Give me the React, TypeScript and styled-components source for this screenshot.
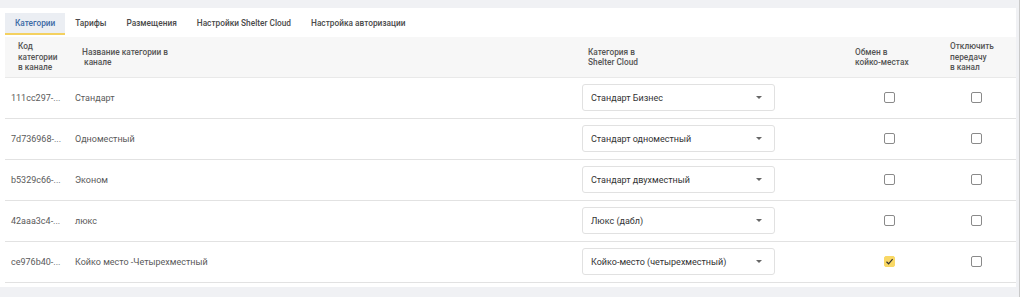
import React from 'react';
import styled, { createGlobalStyle } from 'styled-components';

const GlobalStyle = createGlobalStyle`
  html, body {
    margin: 0;
    padding: 0;
    background: #ffffff;
    font-family: Roboto, "Liberation Sans", Arial, sans-serif;
  }
`;

const rows = [
  { code: '111cc297-...', name: 'Стандарт', category: 'Стандарт Бизнес', beds: false, off: false },
  { code: '7d736968-...', name: 'Одноместный', category: 'Стандарт одноместный', beds: false, off: false },
  { code: 'b5329c66-...', name: 'Эконом', category: 'Стандарт двухместный', beds: false, off: false },
  { code: '42aaa3c4-...', name: 'люкс', category: 'Люкс (дабл)', beds: false, off: false },
  {
    code: 'ce976b40-...',
    name: 'Койко место -Четырехместный',
    category: 'Койко-место (четырехместный)',
    beds: true,
    off: false,
  },
];

const tabs = ['Категории', 'Тарифы', 'Размещения', 'Настройки Shelter Cloud', 'Настройка авторизации'];

const Checkbox = ({ checked }: { checked: boolean }) => (
  <Box $checked={checked}>
    {checked && (
      <svg width="9" height="9" viewBox="0 0 9 9">
        <path d="M1.5 4.8 L3.6 6.8 L7.6 2.2" fill="none" stroke="#333" strokeWidth="1.2" />
      </svg>
    )}
  </Box>
);

const App = () => {
  return (
    <Page>
      <GlobalStyle />
      <Main>
        <Card>
          <Tabs>
            {tabs.map((t, i) => (
              <Tab key={t} $active={i === 0}>
                {t}
              </Tab>
            ))}
          </Tabs>
          <HeaderRow>
            <HeadCell $pad={13}>
              Код
              <br />
              категории
              <br />в канале
            </HeadCell>
            <HeadCell $pad={12}>
              Название категории в
              <br />
              &nbsp;канале
            </HeadCell>
            <HeadCell $pad={12}>
              Категория в
              <br />
              Shelter Cloud
            </HeadCell>
            <HeadCell $pad={6}>
              Обмен в
              <br />
              койко-местах
            </HeadCell>
            <HeadCell $pad={6}>
              Отключить
              <br />
              передачу
              <br />в канал
            </HeadCell>
          </HeaderRow>
          {rows.map((r) => (
            <Row key={r.code}>
              <Cell $pad={6}>{r.code}</Cell>
              <Cell $pad={5}>{r.name}</Cell>
              <Cell $pad={6}>
                <Select>
                  <span>{r.category}</span>
                  <Arrow />
                </Select>
              </Cell>
              <Cell $pad={35}>
                <Checkbox checked={r.beds} />
              </Cell>
              <Cell $pad={27}>
                <Checkbox checked={r.off} />
              </Cell>
            </Row>
          ))}
        </Card>
      </Main>
    </Page>
  );
};

export default App;

const Page = styled.div`
  display: flex;
  width: 1024px;
  height: 297px;
  overflow: hidden;
`;

const Main = styled.div`
  width: 1020px;
  height: 297px;
  background: #f0f1f4;
  border-right: 1px solid #c9c9c9;
  padding: 8px 3px 10px 0;
  box-sizing: border-box;
`;

const Card = styled.div`
  background: #ffffff;
  height: 279px;
  padding: 5px 0 0 5px;
  box-sizing: border-box;
`;

const Tabs = styled.div`
  display: flex;
  height: 22px;
  margin-bottom: 2px;
`;

const Tab = styled.div<{ $active?: boolean }>`
  display: flex;
  align-items: center;
  padding: 0 10px;
  font-size: 8.3px;
  font-weight: 500;
  color: ${(p) => (p.$active ? '#3c6aa5' : '#4a4a4a')};
  background: ${(p) => (p.$active ? '#ebeef3' : 'transparent')};
  border-bottom: 2px solid ${(p) => (p.$active ? '#f4d160' : 'transparent')};
  box-sizing: border-box;
`;

const grid = `
  display: grid;
  grid-template-columns: 65px 506px 273px 95px 1fr;
`;

const HeaderRow = styled.div`
  ${grid}
  height: 40px;
  background: #f7f7f7;
  border-bottom: 1px solid #e9e9e9;
`;

const HeadCell = styled.div<{ $pad: number }>`
  padding-left: ${(p) => p.$pad}px;
  align-self: center;
  font-size: 8.3px;
  line-height: 10.5px;
  font-weight: 500;
  color: #555555;
`;

const Row = styled.div`
  ${grid}
  height: 40px;
  border-bottom: 1px solid #e2e2e2;
  align-items: center;
`;

const Cell = styled.div<{ $pad: number }>`
  padding-left: ${(p) => p.$pad}px;
  font-size: 9px;
  color: #5a5a5a;
  display: flex;
  align-items: center;
  margin-top: -1px;
`;

const Select = styled.div`
  width: 193px;
  height: 27px;
  box-sizing: border-box;
  border: 1px solid #e1e1e1;
  border-radius: 3px;
  display: flex;
  align-items: center;
  justify-content: space-between;
  padding: 0 12px 0 8px;
  font-size: 9px;
  color: #333333;
`;

const Arrow = styled.span`
  width: 0;
  height: 0;
  border-left: 3px solid transparent;
  border-right: 3px solid transparent;
  border-top: 3px solid #666666;
`;

const Box = styled.span<{ $checked: boolean }>`
  width: 11px;
  height: 11px;
  box-sizing: border-box;
  border-radius: 2px;
  border: 1px solid ${(p) => (p.$checked ? '#f9d865' : '#8a8a8a')};
  background: ${(p) => (p.$checked ? '#f9d865' : '#ffffff')};
  display: flex;
  align-items: center;
  justify-content: center;
`;
